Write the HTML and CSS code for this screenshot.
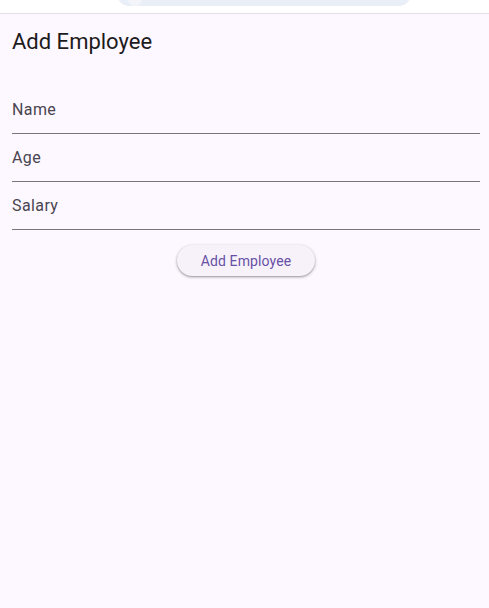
FILE: index.html
```html
<!DOCTYPE html>
<html>
<head>
<meta charset="utf-8">
<link rel="stylesheet" href="styles.css">
</head>
<body>
<div class="topbar">
  <div class="pill"><span class="dot"></span></div>
</div>
<main class="page">
  <h1 class="title">Add Employee</h1>
  <div class="field"><span class="label">Name</span></div>
  <div class="field"><span class="label">Age</span></div>
  <div class="field"><span class="label">Salary</span></div>
  <div class="actions"><button class="btn">Add Employee</button></div>
</main>
</body>
</html>
```
FILE: styles.css
```css
html, body {
  margin: 0;
  padding: 0;
  height: 100%;
}
body {
  background: #fdf7ff;
  font-family: Roboto, "Noto Sans", sans-serif;
  display: flex;
  flex-direction: column;
}
.topbar {
  height: 13px;
  background: #ffffff;
  border-bottom: 1px solid #e3e1e6;
  overflow: hidden;
  flex: none;
}
.pill {
  margin-left: 118px;
  margin-top: -14px;
  width: 292px;
  height: 20px;
  border-radius: 10px;
  background: #e9eef7;
  position: relative;
}
.dot {
  position: absolute;
  left: 10px;
  top: 0;
  width: 14px;
  height: 20px;
  border-radius: 7px;
  background: #f3f5fa;
}
.page {
  flex: 1;
  padding: 14px 9px 0 12px;
}
.title {
  margin: 0;
  font-weight: 400;
  font-size: 22px;
  line-height: 28px;
  color: #1d1b20;
  height: 28px;
  margin-bottom: 30px;
}
.field {
  height: 47px;
  border-bottom: 1px solid #79747e;
  display: flex;
  align-items: center;
}
.label {
  font-size: 16px;
  color: #49454f;
  letter-spacing: 0.4px;
  line-height: 24px;
}
.actions {
  display: flex;
  justify-content: center;
  padding-top: 15px;
}
.btn {
  font-family: Roboto, "Noto Sans", sans-serif;
  font-size: 14px;
  color: #6750a4;
  background: #f7f2fa;
  border: none;
  border-radius: 16px;
  height: 31px;
  width: 138px;
  letter-spacing: 0.1px;
  box-shadow: 0 1px 2px rgba(0,0,0,0.3), 0 1px 3px 1px rgba(0,0,0,0.1);
  padding: 0;
}
```
